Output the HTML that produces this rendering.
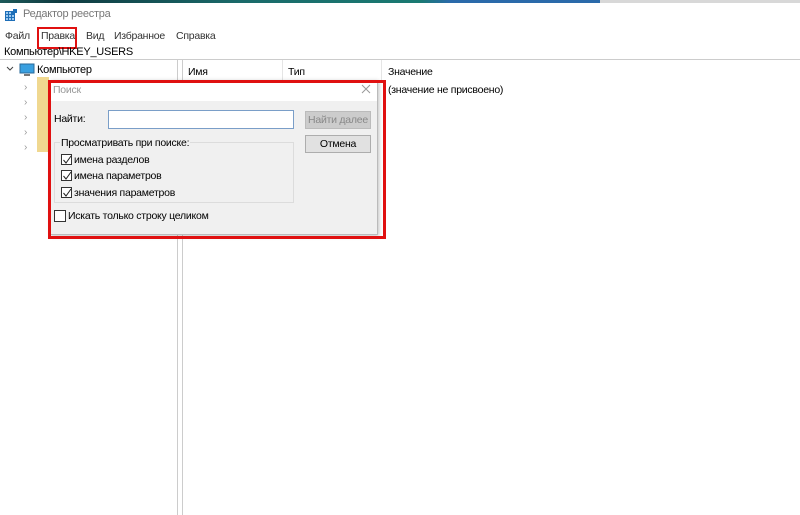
<!DOCTYPE html>
<html><head><meta charset="utf-8"><style>
*{margin:0;padding:0;box-sizing:border-box}
body{width:800px;height:515px;background:#fff;font-family:"Liberation Sans",sans-serif;font-size:10.5px;letter-spacing:-0.25px;color:#000;position:relative;overflow:hidden}
.a{position:absolute;white-space:nowrap}
.cb{position:absolute;width:11px;height:11px;border:1px solid #333;background:#fff}
.cb svg{position:absolute;left:0;top:0}
</style></head><body>
<div class="a" style="left:0;top:0;width:600px;height:3px;background:linear-gradient(90deg,#1d5a5a,#0f3a40 10%,#1a6a6a 40%,#1a7a72 70%,#2a6aaa 75%)"></div>
<div class="a" style="left:600px;top:0;width:200px;height:3px;background:#d8d8d8"></div>
<svg class="a" style="left:5px;top:9px" width="12" height="12"><rect x="0" y="2" width="10" height="10" fill="#1e6fb8"/><g fill="#9cc8ee"><rect x="1" y="3" width="2" height="2"/><rect x="4" y="3" width="2" height="2"/><rect x="1" y="6" width="2" height="2"/><rect x="4" y="6" width="2" height="2"/><rect x="7" y="6" width="2" height="2"/><rect x="1" y="9" width="2" height="2"/><rect x="4" y="9" width="2" height="2"/><rect x="7" y="9" width="2" height="2"/></g><rect x="8" y="0" width="4" height="4" fill="#1e6fb8"/></svg>
<div class="a" style="left:23px;top:8px;font-size:11px;color:#777">Редактор реестра</div>
<div class="a" style="left:5px;top:30px;color:#333">Файл</div>
<div class="a" style="left:41px;top:30px;color:#333">Правка</div>
<div class="a" style="left:86px;top:30px;color:#333">Вид</div>
<div class="a" style="left:114px;top:30px;color:#333">Избранное</div>
<div class="a" style="left:176px;top:30px;color:#333">Справка</div>
<div class="a" style="left:37px;top:27px;width:40px;height:22px;border:2px solid #e01010"></div>
<div class="a" style="left:4px;top:46px;font-size:11px">Компьютер\HKEY_USERS</div>
<div class="a" style="left:0;top:59px;width:800px;height:1px;background:#ccc"></div>
<div class="a" style="left:177px;top:60px;width:1px;height:455px;background:#ccc"></div>
<div class="a" style="left:182px;top:60px;width:1px;height:455px;background:#ccc"></div>
<svg class="a" style="left:6px;top:65px" width="8" height="8"><path d="M1 2l3 3 3-3" stroke="#444" fill="none"/></svg>
<svg class="a" style="left:19px;top:63px" width="16" height="14"><rect x="1" y="1" width="14" height="9" fill="#3aa0e0" stroke="#2a6a9a"/><rect x="5" y="11" width="6" height="2" fill="#777"/></svg>
<div class="a" style="left:37px;top:64px;font-size:11px">Компьютер</div>
<div class="a" style="left:24px;top:80px;line-height:15px;color:#999;font-size:10px">›<br>›<br>›<br>›<br>›</div>
<div class="a" style="left:37px;top:77px;width:12px;height:75px;background:#f0d890"></div>
<div class="a" style="left:188px;top:66px">Имя</div>
<div class="a" style="left:282px;top:60px;width:1px;height:20px;background:#e5e5e5"></div>
<div class="a" style="left:288px;top:66px">Тип</div>
<div class="a" style="left:381px;top:60px;width:1px;height:20px;background:#e5e5e5"></div>
<div class="a" style="left:388px;top:66px">Значение</div>
<div class="a" style="left:388px;top:84px">(значение не присвоено)</div>
<!-- dialog -->
<div class="a" style="left:50px;top:80px;width:328px;height:155px;background:#f0f0f0;border:1px solid #bbb;box-shadow:1px 1px 4px rgba(0,0,0,.25)"></div>
<div class="a" style="left:51px;top:81px;width:326px;height:20px;background:#fff"></div>
<div class="a" style="left:53px;top:84px;color:#999">Поиск</div>
<svg class="a" style="left:361px;top:84px" width="10" height="10"><path d="M1 1l8 8M9 1l-8 8" stroke="#999"/></svg>
<div class="a" style="left:54px;top:113px">Найти:</div>
<div class="a" style="left:108px;top:110px;width:186px;height:19px;background:#fff;border:1px solid #7a9ec8"></div>
<div class="a" style="left:305px;top:111px;width:66px;height:18px;background:#ccc;border:1px solid #bbb;color:#888;text-align:center;line-height:16px">Найти далее</div>
<div class="a" style="left:305px;top:135px;width:66px;height:18px;background:#e1e1e1;border:1px solid #adadad;text-align:center;line-height:16px">Отмена</div>
<div class="a" style="left:54px;top:142px;width:240px;height:61px;border:1px solid #dcdcdc"></div>
<div class="a" style="left:60px;top:137px;background:#f0f0f0;padding:0 1px">Просматривать при поиске:</div>
<div class="cb" style="left:61px;top:154px"><svg width="11" height="11"><path d="M1.5 5l2.5 3 5-7" stroke="#222" fill="none"/></svg></div>
<div class="a" style="left:74px;top:154px">имена разделов</div>
<div class="cb" style="left:61px;top:170px"><svg width="11" height="11"><path d="M1.5 5l2.5 3 5-7" stroke="#222" fill="none"/></svg></div>
<div class="a" style="left:74px;top:170px">имена параметров</div>
<div class="cb" style="left:61px;top:187px"><svg width="11" height="11"><path d="M1.5 5l2.5 3 5-7" stroke="#222" fill="none"/></svg></div>
<div class="a" style="left:74px;top:187px">значения параметров</div>
<div class="cb" style="left:54px;top:210px;width:12px;height:12px"></div>
<div class="a" style="left:68px;top:210px">Искать только строку целиком</div>
<div class="a" style="left:48px;top:80px;width:338px;height:159px;border:3px solid #e01010"></div>
</body></html>
